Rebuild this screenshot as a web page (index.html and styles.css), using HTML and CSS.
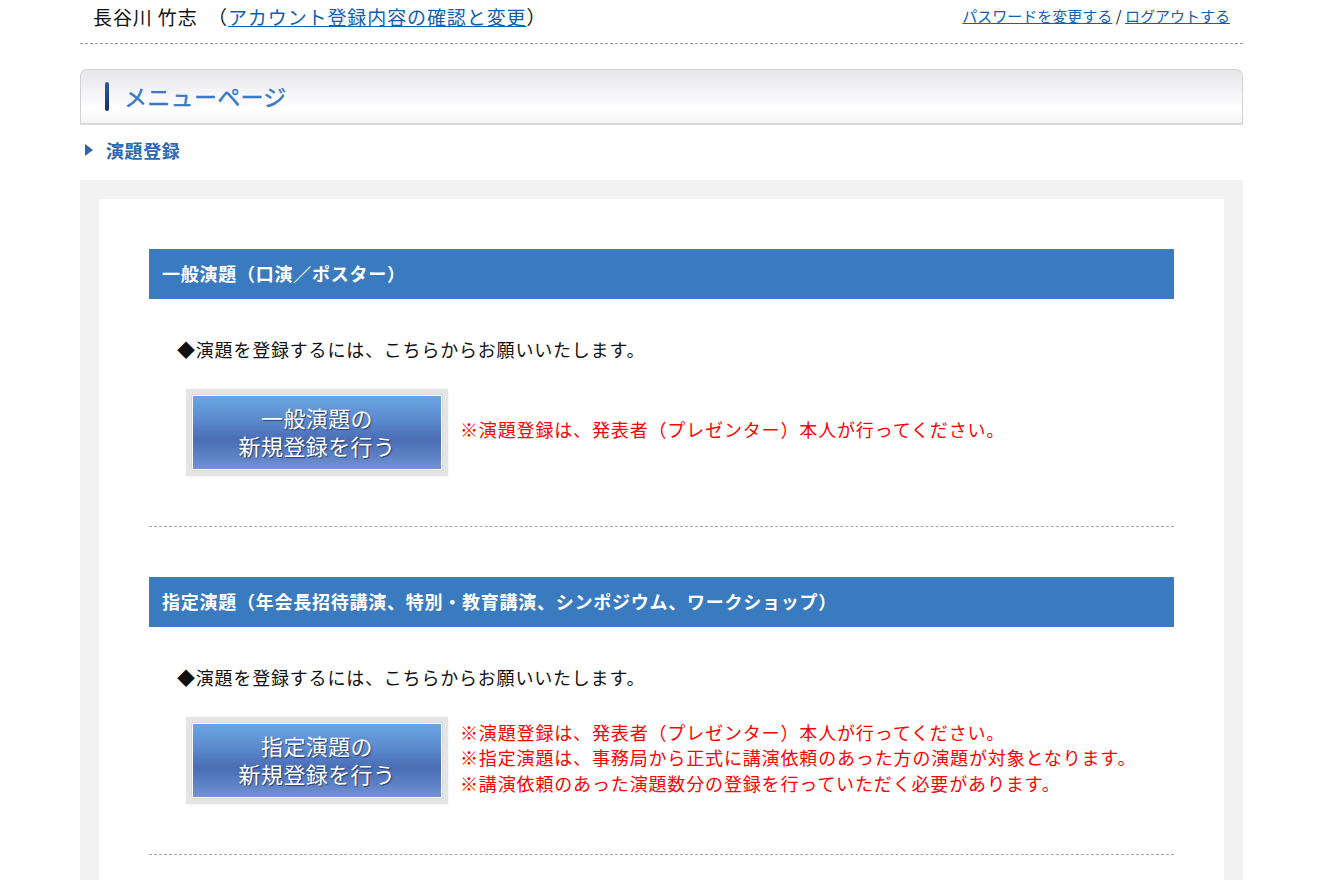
FILE: index.html
```html
<!DOCTYPE html>
<html lang="ja">
<head>
<meta charset="utf-8">
<title>メニューページ</title>
<link rel="stylesheet" href="styles.css">
</head>
<body>
<div class="wrap">
  <header class="top">
    <div class="user">長谷川 竹志　（<a href="#">アカウント登録内容の確認と変更</a>）</div>
    <div class="links"><a href="#">パスワードを変更する</a> / <a href="#">ログアウトする</a></div>
  </header>

  <div class="pagetitle">
    <span class="bar"></span>
    <h1>メニューページ</h1>
  </div>

  <h2 class="subttl"><span class="tri"></span>演題登録</h2>

  <div class="outer">
    <div class="inner">
      <section class="sec">
        <h3 class="sechead">一般演題（口演／ポスター）</h3>
        <p class="lead">◆演題を登録するには、こちらからお願いいたします。</p>
        <div class="row">
          <div class="btnbox"><a class="btn" href="#"><span class="ln">一般演題の</span><span class="ln">新規登録を行う</span></a></div>
          <div class="notes">
            <p>※演題登録は、発表者（プレゼンター）本人が行ってください。</p>
          </div>
        </div>
      </section>
      <section class="sec">
        <h3 class="sechead">指定演題（年会長招待講演、特別・教育講演、シンポジウム、ワークショップ）</h3>
        <p class="lead">◆演題を登録するには、こちらからお願いいたします。</p>
        <div class="row">
          <div class="btnbox"><a class="btn" href="#"><span class="ln">指定演題の</span><span class="ln">新規登録を行う</span></a></div>
          <div class="notes">
            <p>※演題登録は、発表者（プレゼンター）本人が行ってください。</p>
            <p>※指定演題は、事務局から正式に講演依頼のあった方の演題が対象となります。</p>
            <p>※講演依頼のあった演題数分の登録を行っていただく必要があります。</p>
          </div>
        </div>
      </section>
    </div>
  </div>
</div>
</body>
</html>
```
FILE: styles.css
```css
html, body {
  margin: 0;
  padding: 0;
  background: #fff;
}
body {
  font-family: "Noto Sans CJK JP", "Noto Sans", sans-serif;
  color: #111;
}
.wrap {
  width: 1163px;
  margin: 0 0 0 80px;
}
.top {
  display: flex;
  justify-content: space-between;
  align-items: flex-start;
  height: 43px;
  border-bottom: 1px dashed #9a9a9a;
}
.user {
  font-size: 19px;
  letter-spacing: 0.9px;
  line-height: 26px;
  padding: 4px 0 0 13px;
  color: #111;
}
.user a, .links a {
  color: #1060b0;
  text-decoration: underline;
}
.links {
  font-size: 15px;
  line-height: 20px;
  padding: 6px 13px 0 0;
  color: #111;
}
.pagetitle {
  margin-top: 25px;
  height: 53px;
  border: 1px solid #d2d2d6;
  border-bottom: 2px solid #d8d8d8;
  border-radius: 7px 7px 0 0;
  background: linear-gradient(#e6e6eb 0%, #f6f6f8 45%, #ffffff 75%, #f4f4f4 100%);
  display: flex;
  align-items: center;
  padding-left: 24px;
  gap: 15px;
}
.pagetitle .bar {
  width: 4px;
  height: 29px;
  border-radius: 2px;
  background: linear-gradient(#2b5aa8, #142f6a);
}
.pagetitle h1 {
  margin: 0 0 2px 0;
  font-size: 23px;
  font-weight: normal;
  color: #3a79c4;
  letter-spacing: 0.3px;
  -webkit-text-stroke: 0.4px #3a79c4;
}
.subttl {
  margin: 0 0 6px 0;
  height: 49px;
  display: flex;
  align-items: center;
  padding-left: 5px;
  font-size: 18px;
  letter-spacing: 0.6px;
  font-weight: bold;
  color: #2e68ae;
  gap: 13px;
}
.subttl .tri {
  width: 0;
  height: 0;
  border-top: 6px solid transparent;
  border-bottom: 6px solid transparent;
  border-left: 8px solid #2a65ad;
}
.outer {
  background: #f2f2f2;
  padding: 19px 19px 0 19px;
}
.inner {
  background: #fff;
  padding: 50px 50px 30px 50px;
}
.sec {
  border-bottom: 1px dashed #a8a8a8;
  padding-bottom: 50px;
  margin-bottom: 50px;
}
.sechead {
  margin: 0;
  height: 50px;
  line-height: 48px;
  background: #3a7abf;
  color: #fff;
  font-size: 18px;
  letter-spacing: 0.75px;
  font-weight: bold;
  padding-left: 13px;
}
.lead {
  margin: 37px 0 0 28px;
  font-size: 18px;
  letter-spacing: 0.8px;
  line-height: 26px;
  color: #111;
}
.row {
  display: flex;
  align-items: center;
  margin: 27px 0 0 37px;
  gap: 12px;
}
.btnbox {
  background: #e4e4e4;
  padding: 6px;
  box-shadow: 0 0 2px rgba(0,0,0,0.08);
}
.btn {
  display: flex;
  flex-direction: column;
  align-items: center;
  justify-content: center;
  text-align: center;
  width: 248px;
  height: 69px;
  padding-bottom: 4px;
  border: 1px solid #fff;
  background: linear-gradient(#69a5e3 0%, #5a88cc 35%, #4a6db4 60%, #5a7fc2 80%, #7492d2 100%);
  color: #fff;
  text-decoration: none;
  font-size: 22px;
  letter-spacing: 0.4px;
  text-shadow: 1px 1px 1px rgba(20,30,70,0.7);
  box-shadow: 0 0 1px rgba(0,0,0,0.3);
}
.btn .ln {
  display: block;
  height: 28px;
  line-height: 28px;
}
.notes {
  padding-bottom: 5px;
}
.notes p {
  margin: 0;
  color: #f00;
  font-size: 18px;
  letter-spacing: 0.85px;
  line-height: 25.5px;
}
```
